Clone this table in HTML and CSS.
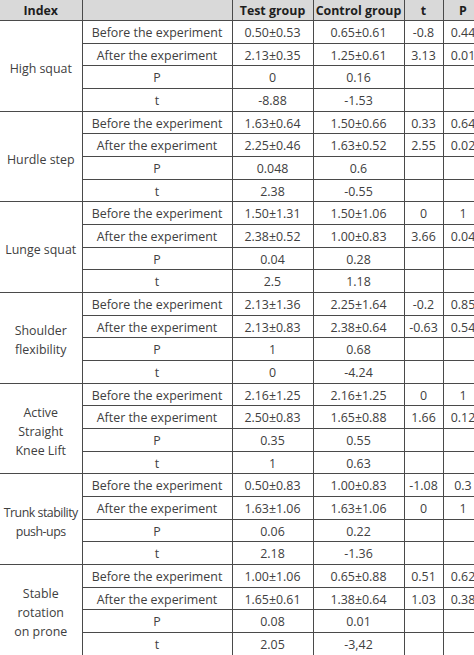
FILE: index.html
```html
<!DOCTYPE html>
<html>
<head>
<meta charset="utf-8">
<link rel="stylesheet" href="styles.css">
</head>
<body>
<table class="data">
<colgroup>
<col class="c1"><col class="c2"><col class="c3"><col class="c4"><col class="c5"><col class="c6">
</colgroup>
<thead>
<tr class="head"><th>Index</th><th></th><th>Test group</th><th>Control group</th><th>t</th><th>P</th></tr>
</thead>
<tbody>
<tr class="first"><td class="idx" rowspan="4">High squat</td><td>Before the experiment</td><td>0.50±0.53</td><td>0.65±0.61</td><td>-0.8</td><td>0.44</td></tr>
<tr><td>After the experiment</td><td>2.13±0.35</td><td>1.25±0.61</td><td>3.13</td><td>0.01</td></tr>
<tr><td>P</td><td>0</td><td>0.16</td><td></td><td></td></tr>
<tr><td>t</td><td>-8.88</td><td>-1.53</td><td></td><td></td></tr>

<tr class="first"><td class="idx" rowspan="4">Hurdle step</td><td>Before the experiment</td><td>1.63±0.64</td><td>1.50±0.66</td><td>0.33</td><td>0.64</td></tr>
<tr><td>After the experiment</td><td>2.25±0.46</td><td>1.63±0.52</td><td>2.55</td><td>0.02</td></tr>
<tr><td>P</td><td>0.048</td><td>0.6</td><td></td><td></td></tr>
<tr><td>t</td><td>2.38</td><td>-0.55</td><td></td><td></td></tr>

<tr class="first"><td class="idx" rowspan="4">Lunge squat</td><td>Before the experiment</td><td>1.50±1.31</td><td>1.50±1.06</td><td>0</td><td>1</td></tr>
<tr><td>After the experiment</td><td>2.38±0.52</td><td>1.00±0.83</td><td>3.66</td><td>0.04</td></tr>
<tr><td>P</td><td>0.04</td><td>0.28</td><td></td><td></td></tr>
<tr><td>t</td><td>2.5</td><td>1.18</td><td></td><td></td></tr>

<tr class="first"><td class="idx" rowspan="4">Shoulder<br>flexibility</td><td>Before the experiment</td><td>2.13±1.36</td><td>2.25±1.64</td><td>-0.2</td><td>0.85</td></tr>
<tr><td>After the experiment</td><td>2.13±0.83</td><td>2.38±0.64</td><td>-0.63</td><td>0.54</td></tr>
<tr><td>P</td><td>1</td><td>0.68</td><td></td><td></td></tr>
<tr><td>t</td><td>0</td><td>-4.24</td><td></td><td></td></tr>

<tr class="first"><td class="idx" rowspan="4">Active<br>Straight<br>Knee Lift</td><td>Before the experiment</td><td>2.16±1.25</td><td>2.16±1.25</td><td>0</td><td>1</td></tr>
<tr><td>After the experiment</td><td>2.50±0.83</td><td>1.65±0.88</td><td>1.66</td><td>0.12</td></tr>
<tr><td>P</td><td>0.35</td><td>0.55</td><td></td><td></td></tr>
<tr><td>t</td><td>1</td><td>0.63</td><td></td><td></td></tr>

<tr class="first"><td class="idx tight" rowspan="4">Trunk stability<br>push-ups</td><td>Before the experiment</td><td>0.50±0.83</td><td>1.00±0.83</td><td>-1.08</td><td>0.3</td></tr>
<tr><td>After the experiment</td><td>1.63±1.06</td><td>1.63±1.06</td><td>0</td><td>1</td></tr>
<tr><td>P</td><td>0.06</td><td>0.22</td><td></td><td></td></tr>
<tr><td>t</td><td>2.18</td><td>-1.36</td><td></td><td></td></tr>

<tr class="first"><td class="idx" rowspan="4">Stable<br>rotation<br>on prone</td><td>Before the experiment</td><td>1.00±1.06</td><td>0.65±0.88</td><td>0.51</td><td>0.62</td></tr>
<tr><td>After the experiment</td><td>1.65±0.61</td><td>1.38±0.64</td><td>1.03</td><td>0.38</td></tr>
<tr><td>P</td><td>0.08</td><td>0.01</td><td></td><td></td></tr>
<tr><td>t</td><td>2.05</td><td>-3,42</td><td></td><td></td></tr>
</tbody>
</table>
</body>
</html>
```
FILE: styles.css
```css
html, body {
  margin: 0;
  padding: 0;
  background: #ffffff;
  overflow: hidden;
}
body {
  width: 474px;
  height: 655px;
  font-family: "Open Sans", "Noto Sans", sans-serif;
  color: #404040;
}
.data {
  border-collapse: collapse;
  table-layout: fixed;
  width: 483px;
  font-size: 12.4px;
}
.c1 { width: 82px; }
.c2 { width: 150px; }
.c3 { width: 81px; }
.c4 { width: 91px; }
.c5 { width: 39px; }
.c6 { width: 40px; }
.data th, .data td {
  border: 1px solid #4a4a4a;
  padding: 1px 0 0;
  text-align: center;
  vertical-align: middle;
  white-space: nowrap;
  line-height: 15px;
}
.head th {
  height: 20px;
  background: #d9d9d9;
  color: #1e1e1e;
  font-weight: 700;
  border-top: none;
  padding: 0;
}
.data th:first-child, .data td.idx {
  border-left: none;
}
.data tbody tr {
  height: 22.68px;
}
.data td.idx {
  line-height: 19px;
  white-space: normal;
  padding-top: 5px;
}
.data td.tight {
  letter-spacing: -0.5px;
}
```
